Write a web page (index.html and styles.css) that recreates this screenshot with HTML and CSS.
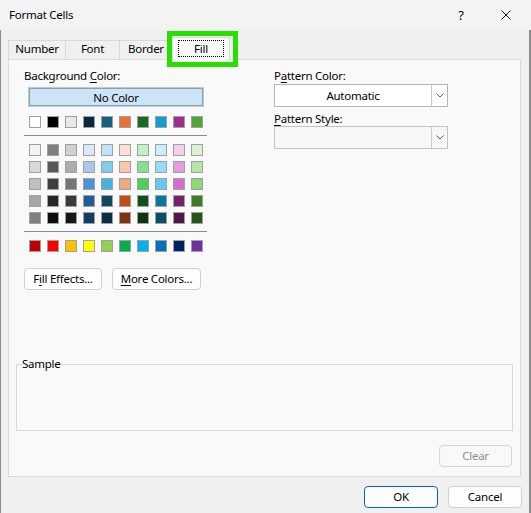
FILE: index.html
```html
<!DOCTYPE html>
<html>
<head>
<meta charset="utf-8">
<title>Format Cells</title>
<link rel="stylesheet" href="styles.css">
</head>
<body>
<div class="window">
  <div class="titlebar">
    <span class="title">Format Cells</span>
    <span class="help">?</span>
    <svg class="close" width="10" height="10" viewBox="0 0 10 10"><path d="M0.5 0.5L9.5 9.5M9.5 0.5L0.5 9.5" stroke="#1b1b1b" stroke-width="1" fill="none"/></svg>
  </div>
  <div class="main">
    <div class="tabs">
      <div class="tab t-number">Number</div>
      <div class="tab t-font">Font</div>
      <div class="tab t-border">Border</div>
      <div class="tab active t-fill"><span class="focus">Fill</span></div>
      <div class="highlight"></div>
    </div>
    <div class="panel">
      <div class="top">
        <div class="left-col">
          <div class="label">Background <u>C</u>olor:</div>
          <div class="nocolor">No Color</div>
          <div class="row">
            <div class="sw" style="background:#ffffff"></div>
            <div class="sw" style="background:#000000"></div>
            <div class="sw" style="background:#e8e8e8"></div>
            <div class="sw" style="background:#0e2841"></div>
            <div class="sw" style="background:#156082"></div>
            <div class="sw" style="background:#e97132"></div>
            <div class="sw" style="background:#196b24"></div>
            <div class="sw" style="background:#0f9ed5"></div>
            <div class="sw" style="background:#a02b93"></div>
            <div class="sw" style="background:#4ea72e"></div>
          </div>
          <div class="sep"></div>
          <div class="grid">
            <div class="sw" style="background:#f2f2f2"></div>
            <div class="sw" style="background:#7f7f7f"></div>
            <div class="sw" style="background:#d0d0d0"></div>
            <div class="sw" style="background:#dae9f8"></div>
            <div class="sw" style="background:#c0e4f5"></div>
            <div class="sw" style="background:#fbe2d5"></div>
            <div class="sw" style="background:#c1f0c8"></div>
            <div class="sw" style="background:#caedfb"></div>
            <div class="sw" style="background:#f2ceef"></div>
            <div class="sw" style="background:#daf2d0"></div>

            <div class="sw" style="background:#d9d9d9"></div>
            <div class="sw" style="background:#595959"></div>
            <div class="sw" style="background:#adadad"></div>
            <div class="sw" style="background:#a6c9ec"></div>
            <div class="sw" style="background:#83cceb"></div>
            <div class="sw" style="background:#f7c7ac"></div>
            <div class="sw" style="background:#83e28e"></div>
            <div class="sw" style="background:#95dcf7"></div>
            <div class="sw" style="background:#e49edd"></div>
            <div class="sw" style="background:#b5e6a2"></div>

            <div class="sw" style="background:#bfbfbf"></div>
            <div class="sw" style="background:#404040"></div>
            <div class="sw" style="background:#757575"></div>
            <div class="sw" style="background:#4d93d9"></div>
            <div class="sw" style="background:#44b3e1"></div>
            <div class="sw" style="background:#f1a983"></div>
            <div class="sw" style="background:#47d359"></div>
            <div class="sw" style="background:#61cbf3"></div>
            <div class="sw" style="background:#d86dcd"></div>
            <div class="sw" style="background:#8ed973"></div>

            <div class="sw" style="background:#a6a6a6"></div>
            <div class="sw" style="background:#262626"></div>
            <div class="sw" style="background:#3a3a3a"></div>
            <div class="sw" style="background:#215c98"></div>
            <div class="sw" style="background:#0f4761"></div>
            <div class="sw" style="background:#c04f15"></div>
            <div class="sw" style="background:#124f1a"></div>
            <div class="sw" style="background:#0b76a0"></div>
            <div class="sw" style="background:#77206d"></div>
            <div class="sw" style="background:#3b7d23"></div>

            <div class="sw" style="background:#808080"></div>
            <div class="sw" style="background:#0d0d0d"></div>
            <div class="sw" style="background:#171717"></div>
            <div class="sw" style="background:#153d64"></div>
            <div class="sw" style="background:#0a2f40"></div>
            <div class="sw" style="background:#7f350e"></div>
            <div class="sw" style="background:#0c3512"></div>
            <div class="sw" style="background:#074f69"></div>
            <div class="sw" style="background:#501549"></div>
            <div class="sw" style="background:#275317"></div>
          </div>
          <div class="sep"></div>
          <div class="row row-std">
            <div class="sw" style="background:#c00000"></div>
            <div class="sw" style="background:#ff0000"></div>
            <div class="sw" style="background:#ffc000"></div>
            <div class="sw" style="background:#ffff00"></div>
            <div class="sw" style="background:#92d050"></div>
            <div class="sw" style="background:#00b050"></div>
            <div class="sw" style="background:#00b0f0"></div>
            <div class="sw" style="background:#0070c0"></div>
            <div class="sw" style="background:#002060"></div>
            <div class="sw" style="background:#7030a0"></div>
          </div>
          <div class="btns">
            <div class="btn b-fill">F<u>i</u>ll Effects...</div>
            <div class="btn b-more"><u>M</u>ore Colors...</div>
          </div>
        </div>
        <div class="right-col">
          <div class="label">P<u>a</u>ttern Color:</div>
          <div class="combo c1">
            <div class="val">Automatic</div>
            <div class="arrow"><svg width="8" height="5" viewBox="0 0 8 5"><path d="M0.5 0.5L4 4L7.5 0.5" stroke="#5a5a5a" stroke-width="1" fill="none"/></svg></div>
          </div>
          <div class="label label2"><u>P</u>attern Style:</div>
          <div class="combo c2">
            <div class="val"></div>
            <div class="arrow"><svg width="8" height="5" viewBox="0 0 8 5"><path d="M0.5 0.5L4 4L7.5 0.5" stroke="#5a5a5a" stroke-width="1" fill="none"/></svg></div>
          </div>
        </div>
      </div>
      <fieldset class="sample">
        <legend>Sample</legend>
      </fieldset>
      <div class="clear-row">
        <div class="btn b-clear">Clear</div>
      </div>
    </div>
    <div class="footer">
      <div class="btn b-ok">OK</div>
      <div class="btn b-cancel">Cancel</div>
    </div>
  </div>
</div>
</body>
</html>
```
FILE: styles.css
```css
* { box-sizing: border-box; }
html, body { margin: 0; padding: 0; }
body {
  width: 531px;
  height: 513px;
  overflow: hidden;
  background: #f0f0f0;
  font-family: "Noto Sans", "Liberation Sans", sans-serif;
  font-size: 11.5px;
  letter-spacing: -0.25px;
  color: #000;
}
u { text-decoration: underline; text-underline-offset: 2px; }
.window { display: flex; flex-direction: column; height: 513px; }

.titlebar {
  height: 30px;
  flex: none;
  display: flex;
  align-items: center;
  background: #f3f3f3;
  padding-left: 9px;
}
.title { flex: 1; line-height: 30px; }
.help { width: 10px; text-align: center; font-size: 13px; margin-right: 35px; line-height: 30px; }
.close { margin-right: 20px; display: block; }

.main {
  flex: 1;
  display: flex;
  flex-direction: column;
  border-left: 1px solid #8c8c8c;
  border-right: 2px solid #8c8c8c;
}

.tabs {
  position: relative;
  z-index: 1;
  display: flex;
  align-items: flex-end;
  height: 23px;
  margin: 7px 0 -1px 7px;
}
.tab {
  height: 19px;
  margin-bottom: 1px;
  border: 1px solid #d9d9d9;
  border-bottom: none;
  background: #f0f0f0;
  text-align: center;
  line-height: 16px;
}
.t-number { width: 58px; }
.t-font { width: 54px; border-left: none; }
.t-border { width: 53px; border-left: none; }
.tab.active {
  width: 58px;
  height: 23px;
  margin-bottom: 0;
  margin-left: -1px;
  background: #f9f9f9;
  padding-top: 2px;
  display: flex;
  justify-content: center;
}
.focus {
  display: block;
  width: 46px;
  height: 17px;
  border: 1px dotted #000;
  line-height: 16px;
}
.highlight {
  position: absolute;
  left: 159px;
  top: -6px;
  width: 71px;
  height: 36px;
  border: 5px solid #26e000;
}

.panel {
  margin: 0 8px 0 7px;
  height: 418px;
  flex: none;
  border: 1px solid #dadada;
  background: #f9f9f9;
  display: flex;
  flex-direction: column;
  padding: 0 7px 9px 7px;
}
.top { display: flex; }
.left-col { width: 183px; margin-left: 8px; }
.right-col { width: 174px; margin-left: 67px; }
.label { line-height: 15px; height: 15px; margin-top: 8px; white-space: nowrap; }
.label2 { margin-top: 4px; }

.nocolor {
  margin: 4px 0 0 4px;
  width: 176px;
  height: 20px;
  border: 1px solid #a9cfef;
  box-shadow: inset 0 0 0 1px #9c9c9c;
  background: #cce4f7;
  text-align: center;
  line-height: 19px;
}
.row { display: flex; gap: 6px; margin-top: 9px; padding-left: 5px; }
.row-std { margin-top: 8px; }
.sw { width: 12px; height: 12px; border: 1px solid #a0a0a0; flex: none; }
.sep { height: 1px; background: #8a8a8a; margin-top: 7px; }
.grid {
  display: grid;
  grid-template-columns: repeat(10, 12px);
  column-gap: 6px;
  row-gap: 5px;
  margin-top: 8px;
  padding-left: 5px;
}
.btns { display: flex; gap: 10px; margin-top: 16px; }
.btn {
  height: 22px;
  border: 1px solid #d0d0d0;
  border-radius: 4px;
  background: #fdfdfd;
  line-height: 20px;
  text-align: center;
  white-space: nowrap;
}
.b-fill { width: 78px; }
.b-more { width: 89px; }

.combo {
  display: flex;
  height: 23px;
  border: 1px solid #b5b5b5;
  background: #ffffff;
  margin-top: 1px;
}
.c2 { margin-top: 0; background: #f7f7f7; border-color: #c2c2c2; }
.combo .val { flex: 1; text-align: center; line-height: 21px; }
.combo .arrow {
  width: 16px;
  border-left: 1px solid #cacaca;
  display: flex;
  align-items: center;
  justify-content: center;
}

.sample {
  margin: auto 0 0 0;
  padding: 0;
  height: 75px;
  border: 1px solid #d9d9d9;
  min-width: 0;
}
.sample legend {
  padding: 0;
  margin-left: 5px;
  line-height: 16px;
  font-size: 11.5px;
}
.clear-row { display: flex; justify-content: flex-end; margin-top: 14px; margin-right: 1px; }
.b-clear { width: 73px; color: #8d8d8d; border-color: #d6d6d6; background: #f9f9f9; }

.footer {
  display: flex;
  justify-content: flex-end;
  gap: 10px;
  margin: 9px 7px 0 0;
}
.b-ok { width: 74px; border-color: #0067c0; }
.b-cancel { width: 74px; }
```
